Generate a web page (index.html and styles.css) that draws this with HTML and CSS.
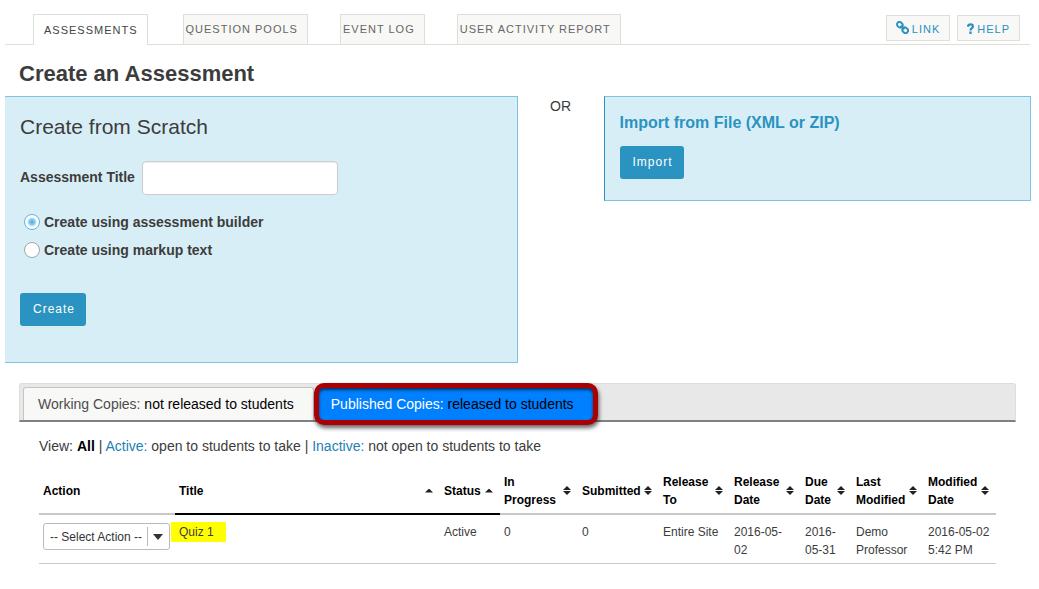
FILE: index.html
```html
<!DOCTYPE html>
<html lang="en">
<head>
<meta charset="utf-8">
<title>Assessments</title>
<link rel="stylesheet" href="styles.css">
</head>
<body>
<header class="topbar">
  <nav class="tabs">
    <a class="tab tab-current" href="#">ASSESSMENTS</a>
    <a class="tab" href="#">QUESTION POOLS</a>
    <a class="tab" href="#">EVENT LOG</a>
    <a class="tab" href="#">USER ACTIVITY REPORT</a>
  </nav>
  <div class="tools">
    <a class="tool" href="#">
      <svg class="tool-icon link-icon" viewBox="0 0 13 13" aria-hidden="true"><g fill="none" stroke="currentColor" stroke-width="1.900"><rect x="0.900" y="1.200" width="5.800" height="5" rx="2.400" transform="rotate(42 3.800 3.700)"/><rect x="6.300" y="6.800" width="5.800" height="5" rx="2.400" transform="rotate(42 9.200 9.300)"/><path d="M4.600 4.600 8.400 8.400"/></g></svg>
      <span>LINK</span>
    </a>
    <a class="tool" href="#">
      <svg class="tool-icon help-icon" viewBox="0 0 7 11" aria-hidden="true"><path d="M0.700 3.700C1.100 2 2 1.300 3.400 1.300 5 1.300 5.900 2.100 5.900 3.400 5.900 5.300 3.500 5.100 3.500 7.400" fill="none" stroke="currentColor" stroke-width="2.200"/><path d="M2.300 8.500h2.400v2.400H2.300z" fill="currentColor"/></svg>
      <span>HELP</span>
    </a>
  </div>
</header>

<main>
  <h1 class="page-title">Create an Assessment</h1>

  <div class="create-grid">
    <form class="panel scratch">
      <h2 class="scratch-title">Create from Scratch</h2>
      <div class="field">
        <label for="title">Assessment Title</label>
        <input class="text-input" id="title" type="text">
      </div>
      <div class="choice">
        <input class="radio" type="radio" name="mode" id="builder" checked>
        <label for="builder">Create using assessment builder</label>
      </div>
      <div class="choice">
        <input class="radio" type="radio" name="mode" id="markup">
        <label for="markup">Create using markup text</label>
      </div>
      <button class="btn create-btn" type="button">Create</button>
    </form>
    <div class="or">OR</div>
    <section class="panel import">
      <h2 class="import-title">Import from File (XML or ZIP)</h2>
      <button class="btn" type="button">Import</button>
    </section>
  </div>

  <div class="copies">
    <a class="copy-tab" href="#">Working Copies: <span class="note">not released to students</span></a>
    <a class="copy-tab copy-current" href="#">Published Copies: <span class="note">released to students</span></a>
  </div>

  <p class="view">View: <b>All</b> | <a href="#">Active:</a> open to students to take | <a href="#">Inactive:</a> not open to students to take</p>

  <table class="list">
    <colgroup>
      <col class="w-action"><col><col class="w-status"><col class="w-progress"><col class="w-submitted"><col class="w-date"><col class="w-date"><col class="w-due"><col class="w-mod"><col class="w-mod">
    </colgroup>
    <thead>
      <tr>
        <th>Action</th>
        <th class="sorted"><div class="head">Title<i class="sort up"></i></div></th>
        <th class="sorted"><div class="head">Status<i class="sort up"></i></div></th>
        <th><div class="head">In Progress<i class="sort both"></i></div></th>
        <th><div class="head">Submitted<i class="sort both"></i></div></th>
        <th><div class="head">Release To<i class="sort both"></i></div></th>
        <th><div class="head">Release Date<i class="sort both"></i></div></th>
        <th><div class="head">Due Date<i class="sort both"></i></div></th>
        <th><div class="head">Last Modified<i class="sort both"></i></div></th>
        <th><div class="head">Modified Date<i class="sort both"></i></div></th>
      </tr>
    </thead>
    <tbody>
      <tr>
        <td><div class="select-box"><select class="select" aria-label="Action"><option>-- Select Action --</option></select></div></td>
        <td><span class="mark">Quiz 1</span></td>
        <td>Active</td>
        <td>0</td>
        <td>0</td>
        <td class="nowrap">Entire Site</td>
        <td class="date">2016-05-02</td>
        <td>2016-05-31</td>
        <td>Demo Professor</td>
        <td class="nowrap">2016-05-02<br>5:42 PM</td>
      </tr>
    </tbody>
  </table>
</main>
</body>
</html>
```

FILE: styles.css
```css
* { box-sizing: border-box; }
body {
  margin: 0;
  padding: 14px 8px 0 5px;
  background: #fff;
  color: #3c3c3c;
  font: 14px/20px "Liberation Sans", Arial, sans-serif;
}
a { color: #2380b5; text-decoration: none; }
h1, h2, p { margin: 0; }

.topbar {
  display: flex;
  justify-content: space-between;
  border-bottom: 1px solid #dddfdb;
  margin-right: 1px;
  height: 31px;
}
.tabs { display: flex; gap: 32px; padding-left: 28px; }
.tab {
  height: 30px;
  padding: 0 9px 0 2px;
  border: 1px solid #dddfdb;
  border-bottom: 0;
  background: #f8f8f6;
  color: #666;
  font-size: 11px;
  line-height: 28px;
  letter-spacing: 1px;
  white-space: nowrap;
}
.tab-current {
  height: 31px;
  margin-right: 3px;
  padding: 1px 9px 0 10px;
  background: #fff;
  color: #444;
}
.tools { display: flex; gap: 7px; padding: 1px 10px 0 0; }
.tool {
  display: flex;
  align-items: center;
  gap: 3px;
  height: 26px;
  padding: 0 9px;
  border: 1px solid #dddfdb;
  background: #f8f8f6;
  color: #2a8fc0;
  font-size: 11px;
  letter-spacing: 1px;
}
.tool span { padding-top: 1px; }
.link-icon { width: 13px; height: 13px; margin-bottom: 1px; }
.help-icon { width: 7px; height: 11px; margin-top: 1px; }

.page-title {
  padding: 16px 14px 9px;
  font-size: 22px;
  line-height: 26px;
}
.create-grid {
  display: grid;
  grid-template-columns: 6fr 1fr 5fr;
  align-items: start;
}
.panel { border: 1px solid #7fc3e1; background: #d8eef6; }
.scratch { border-left: 0; padding: 15px 15px 36px; }
.scratch-title { font-size: 21px; line-height: 30px; font-weight: 400; }
.field { display: flex; align-items: center; gap: 7px; margin: 19px 0 17px; }
.field label, .choice label { font-weight: 700; }
.field label { padding-bottom: 2px; }
.text-input {
  width: 196px;
  height: 34px;
  padding: 0 8px;
  border: 1px solid #ccc;
  border-radius: 4px;
  background: #fff;
  box-shadow: inset 0 1px 1px #eee;
  font: inherit;
}
.choice { display: flex; align-items: center; gap: 4px; height: 20px; margin-bottom: 8px; padding-left: 4px; }
.radio {
  appearance: none;
  width: 16px;
  height: 16px;
  margin: 0;
  border: 1px solid #a5a5a5;
  border-radius: 50%;
  background: #fff;
}
.radio:checked {
  border-color: #5db4e4;
  background: radial-gradient(circle, #4faee0 0, #8acbed 3px, #fff 5px);
}
.btn {
  display: block;
  height: 33px;
  padding: 0 11px 1px 13px;
  border: 0;
  border-radius: 3px;
  background: #2a93c1;
  color: #fff;
  font: 12px/32px "Liberation Sans", Arial, sans-serif;
  letter-spacing: 1px;
}
.create-btn { margin-top: 33px; }
.or { padding-left: 32px; }
.import { padding: 15px 15px 21px; border-left-color: #2a93c1; }
.import-title { margin-bottom: 13px; font-size: 16px; line-height: 21px; color: #2a93c1; }

.copies {
  display: flex;
  margin: 20px 15px 0 14px;
  padding: 3px 3px 0;
  border: 1px solid #ddd;
  border-bottom: 2px solid #808080;
  border-radius: 3px 3px 0 0;
  background: #e8e8e8;
}
.copy-tab {
  height: 33px;
  padding: 0 19px 0 14px;
  border: 1px solid #c4c4c4;
  border-bottom: 0;
  border-radius: 3px 3px 0 0;
  background: #f8f8f6;
  color: #4d4d4d;
  line-height: 32px;
  white-space: nowrap;
}
.note { color: #000; }
.copy-current {
  border: 0;
  border-radius: 5px;
  margin: 1px 0 0 5px;
  height: 32px;
  padding: 0 19px 0 12px;
  background: #007fff;
  color: #fff;
  box-shadow: 0 0 0 5px #a90003, 1px 3px 4px 5px rgba(0, 0, 0, .6), inset 0 2px 3px rgba(0, 0, 0, .6);
}
.view { padding: 14px 34px 11px; }
.view b { color: #000; }

.list {
  width: calc(100% - 69px);
  margin-left: 34px;
  border-collapse: collapse;
  table-layout: fixed;
  font-size: 12px;
  line-height: 18px;
}
.w-action { width: 136px; }
.w-status { width: 60px; }
.w-progress { width: 78px; }
.w-submitted { width: 81px; }
.w-date { width: 71px; }
.w-due { width: 51px; }
.w-mod { width: 72px; }
.list th {
  height: 47px;
  padding: 5px 4px 4px;
  border-bottom: 2px solid #c8c8c8;
  color: #000;
  text-align: left;
  vertical-align: middle;
}
.list th.sorted { border-bottom-color: #000; }
.head { display: flex; align-items: center; justify-content: space-between; padding-right: 3px; }
.sort { flex: none; display: grid; gap: 1px; width: 8px; }
.sort::before, .sort.both::after { content: ""; height: 4px; background: #222; }
.sort::before { clip-path: polygon(50% 0, 100% 100%, 0 100%); }
.sort.both::after { clip-path: polygon(0 0, 100% 0, 50% 100%); }
.list td {
  height: 49px;
  padding: 8px 4px 4px;
  border-bottom: 1px solid #c8c8c8;
  vertical-align: top;
}
.list .nowrap { white-space: nowrap; padding-right: 0; }
.list .date { padding-right: 12px; }
.mark { margin-left: -8px; padding: 3px 12px 3px 8px; background: #ff0; }
.select-box { position: relative; width: 127px; }
.select-box::after {
  content: "";
  position: absolute;
  top: 11px;
  right: 7px;
  width: 10px;
  height: 6px;
  background: #333;
  clip-path: polygon(0 0, 100% 0, 50% 100%);
  pointer-events: none;
}
.select-box::before {
  content: "";
  position: absolute;
  top: 4px;
  bottom: 4px;
  right: 22px;
  width: 1px;
  background: #bbb;
}
.select {
  display: block;
  appearance: none;
  width: 100%;
  height: 27px;
  padding: 0 6px;
  border: 1px solid #bbb;
  border-radius: 3px;
  background: #fff;
  color: #333;
  font: inherit;
}
```
